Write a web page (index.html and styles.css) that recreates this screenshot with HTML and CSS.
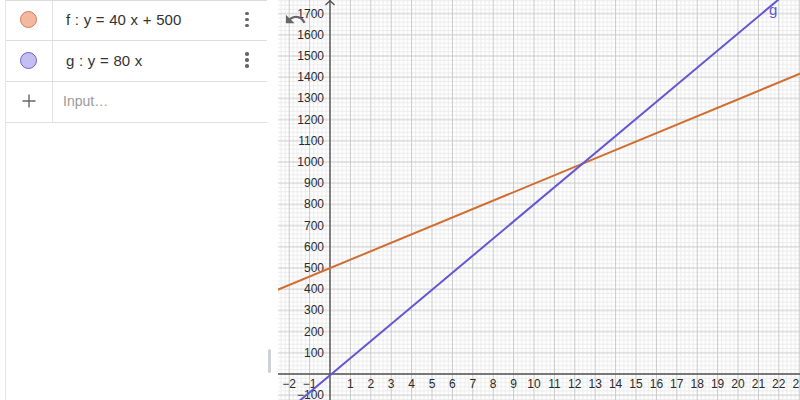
FILE: index.html
```html
<!DOCTYPE html>
<html>
<head>
<meta charset="utf-8">
<link rel="stylesheet" href="styles.css">
</head>
<body>
<div class="app">
  <aside class="algebra">
    <div class="row">
      <div class="marker"><span class="swatch swatch-f"></span></div>
      <div class="content">f : y = 40 x + 500</div>
      <div class="menu"><span></span><span></span><span></span></div>
    </div>
    <div class="row">
      <div class="marker"><span class="swatch swatch-g"></span></div>
      <div class="content">g : y = 80 x</div>
      <div class="menu"><span></span><span></span><span></span></div>
    </div>
    <div class="row">
      <div class="marker">
        <svg class="plus" width="14" height="14" viewBox="0 0 14 14"><path d="M7 0.5V13.5M0.5 7H13.5" stroke="#666" stroke-width="1.4" fill="none"/></svg>
      </div>
      <div class="content input">Input…</div>
    </div>
  </aside>
  <div class="splitter"><span class="handle"></span></div>
  <main class="graphics">
    <svg class="canvas" width="522" height="400" viewBox="0 0 522 400">
      <defs>
        <pattern id="grid" patternUnits="userSpaceOnUse" x="41.8" y="363.4" width="20.4" height="21.2">
          <g stroke="#ebebeb" stroke-width="1">
            <line x1="2.04" y1="0" x2="2.04" y2="21.2"/>
            <line x1="6.12" y1="0" x2="6.12" y2="21.2"/>
            <line x1="14.28" y1="0" x2="14.28" y2="21.2"/>
            <line x1="18.36" y1="0" x2="18.36" y2="21.2"/>
            <line x1="0" y1="2.12" x2="20.4" y2="2.12"/>
            <line x1="0" y1="6.36" x2="20.4" y2="6.36"/>
            <line x1="0" y1="14.84" x2="20.4" y2="14.84"/>
            <line x1="0" y1="19.08" x2="20.4" y2="19.08"/>
          </g>
          <g stroke="#c8c8c8" stroke-width="1">
            <line x1="10.2" y1="0" x2="10.2" y2="21.2"/>
            <line x1="0" y1="10.6" x2="20.4" y2="10.6"/>
          </g>
        </pattern>
      </defs>
      <rect x="0" y="0" width="522" height="400" fill="#fff"/>
      <rect x="0" y="0" width="522" height="400" fill="url(#grid)"/>
      <g stroke="#555" stroke-width="1.4" fill="none">
        <line x1="52" y1="0" x2="52" y2="400"/>
        <line x1="0" y1="374" x2="522" y2="374"/>
        <path d="M47.5 5L52 0.7L56.5 5"/>
      </g>
      <g class="xlabels" text-anchor="middle">
        <text x="11.2" y="388">−2</text>
        <text x="31.6" y="388">−1</text>
        <text x="72.4" y="388">1</text>
        <text x="92.8" y="388">2</text>
        <text x="113.2" y="388">3</text>
        <text x="133.6" y="388">4</text>
        <text x="154" y="388">5</text>
        <text x="174.4" y="388">6</text>
        <text x="194.8" y="388">7</text>
        <text x="215.2" y="388">8</text>
        <text x="235.6" y="388">9</text>
        <text x="256" y="388">10</text>
        <text x="276.4" y="388">11</text>
        <text x="296.8" y="388">12</text>
        <text x="317.2" y="388">13</text>
        <text x="337.6" y="388">14</text>
        <text x="358" y="388">15</text>
        <text x="378.4" y="388">16</text>
        <text x="398.8" y="388">17</text>
        <text x="419.2" y="388">18</text>
        <text x="439.6" y="388">19</text>
        <text x="460" y="388">20</text>
        <text x="480.4" y="388">21</text>
        <text x="500.8" y="388">22</text>
        <text x="521.2" y="388">23</text>
      </g>
      <g class="ylabels" text-anchor="end">
        <text x="46" y="356.8">100</text>
        <text x="46" y="335.6">200</text>
        <text x="46" y="314.4">300</text>
        <text x="46" y="293.2">400</text>
        <text x="46" y="272">500</text>
        <text x="46" y="250.8">600</text>
        <text x="46" y="229.6">700</text>
        <text x="46" y="208.4">800</text>
        <text x="46" y="187.2">900</text>
        <text x="46" y="166">1000</text>
        <text x="46" y="144.8">1100</text>
        <text x="46" y="123.6">1200</text>
        <text x="46" y="102.4">1300</text>
        <text x="46" y="81.2">1400</text>
        <text x="46" y="60">1500</text>
        <text x="46" y="38.8">1600</text>
        <text x="46" y="17.6">1700</text>
        <text x="46" y="399.2">−100</text>
      </g>
      <line x1="-5" y1="291.7" x2="527" y2="71.6" stroke="#cf6e30" stroke-width="2"/>
      <line x1="19.5" y1="402.5" x2="503" y2="-2.5" stroke="#6557d2" stroke-width="2"/>
      <text class="glabel" x="491" y="15">g</text>
    </svg>
    <button class="undo" type="button" aria-label="Undo">
      <svg width="23" height="23" viewBox="0 0 24 24"><path fill="#666" d="M12.5 8c-2.65 0-5.05.99-6.9 2.6L2 7v9h9l-3.62-3.62c1.39-1.16 3.16-1.88 5.12-1.88 3.54 0 6.55 2.31 7.6 5.5l2.37-.78C21.08 11.03 17.15 8 12.5 8z"/></svg>
    </button>
  </main>
</div>
</body>
</html>
```
FILE: styles.css
```css
html, body {
  margin: 0;
  padding: 0;
  background: #fff;
}
body {
  font-family: "Liberation Sans", Arial, sans-serif;
  color: #333;
}
.app {
  display: flex;
  width: 800px;
  height: 400px;
  overflow: hidden;
}
.algebra {
  margin-left: 5px;
  height: 400px;
  border-left: 1px solid #e6e6e6;
  border-top: 1px solid #dcdcdc;
  box-sizing: border-box;
  width: 262px;
  flex: none;
}
.row {
  display: flex;
  align-items: center;
  height: 41px;
  box-sizing: border-box;
  border-bottom: 1px solid #dedede;
}
.row:first-child {
  height: 40px;
}
.marker {
  width: 47px;
  height: 100%;
  flex: none;
  display: flex;
  align-items: center;
  justify-content: center;
  border-right: 1px solid #e2e2e2;
  box-sizing: border-box;
  padding-right: 1px;
  padding-bottom: 2px;
}
.swatch {
  width: 17px;
  height: 17px;
  border-radius: 50%;
  box-sizing: border-box;
  display: block;
}
.swatch-f {
  background: #f4b89f;
  border: 1px solid #cf7c5c;
}
.swatch-g {
  background: #c4bff3;
  border: 1px solid #6d61cf;
}
.plus {
  display: block;
}
.content {
  flex: 1;
  padding-left: 13px;
  padding-bottom: 2px;
  font-size: 15px;
  word-spacing: 0.5px;
  color: #333;
  white-space: nowrap;
}
.content.input {
  padding-left: 10px;
  font-size: 14px;
  color: #9a9a9a;
  word-spacing: 0;
}
.menu {
  width: 4px;
  display: flex;
  flex-direction: column;
  gap: 2.5px;
  margin-right: 18px;
  margin-bottom: 2px;
}
.menu span {
  width: 3.5px;
  height: 3.5px;
  border-radius: 50%;
  background: #666;
}
.splitter {
  width: 11px;
  flex: none;
  display: flex;
  flex-direction: column;
  justify-content: flex-end;
  padding-bottom: 27px;
  box-sizing: border-box;
}
.handle {
  display: block;
  width: 3px;
  height: 24px;
  margin-left: 1px;
  border-radius: 2px;
  background: #cdd0d6;
}
.graphics {
  position: relative;
  width: 522px;
  height: 400px;
  flex: none;
}
.canvas {
  display: block;
}
.xlabels text, .ylabels text {
  font-family: "Liberation Sans", Arial, sans-serif;
  font-size: 12px;
  fill: #2b2b2b;
}
.glabel {
  font-family: "Liberation Sans", Arial, sans-serif;
  font-size: 15px;
  fill: #6557d2;
}
.undo {
  position: absolute;
  left: 6px;
  top: 8px;
  padding: 0;
  border: 0;
  background: transparent;
  display: block;
  line-height: 0;
}
```
